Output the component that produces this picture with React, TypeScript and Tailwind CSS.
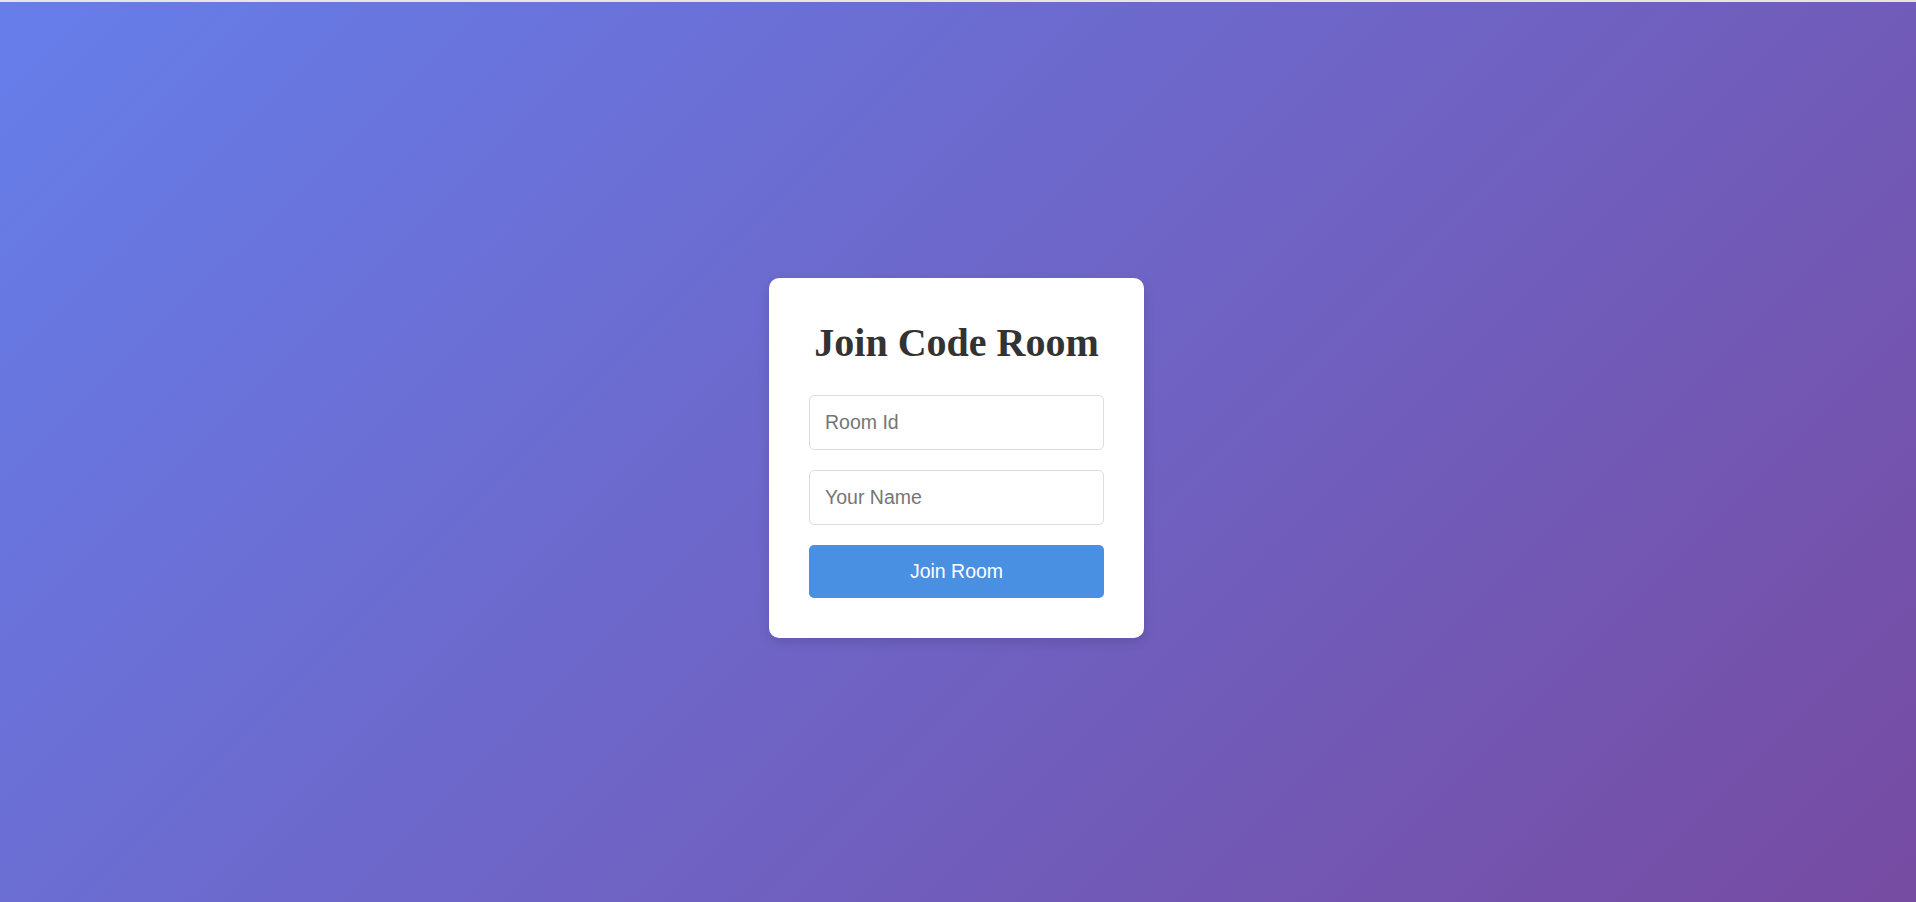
import React from 'react';

const JoinCard: React.FC = () => {
  const [roomId, setRoomId] = React.useState('');
  const [name, setName] = React.useState('');

  return (
    <div className="w-[375px] bg-white rounded-[10px] p-10 shadow-[0_4px_12px_rgba(0,0,0,0.12)]">
      <h1 className="text-center text-[40px] leading-[50px] font-bold text-[#333] mb-[27px] font-['Liberation_Serif',serif]">
        Join Code Room
      </h1>
      <div className="flex flex-col gap-5 font-['Liberation_Sans',Arial,sans-serif]">
        <input
          value={roomId}
          onChange={(e) => setRoomId(e.target.value)}
          placeholder="Room Id"
          className="w-full px-[15px] py-[15px] text-[19.5px] leading-[23px] border border-[#ddd] rounded-[5px] outline-none placeholder:text-[#757575]"
        />
        <input
          value={name}
          onChange={(e) => setName(e.target.value)}
          placeholder="Your Name"
          className="w-full px-[15px] py-[15px] text-[19.5px] leading-[23px] border border-[#ddd] rounded-[5px] outline-none placeholder:text-[#757575]"
        />
        <button className="w-full py-[15px] text-[19.5px] leading-[23px] bg-[#4a90e2] text-white rounded-[5px]">
          Join Room
        </button>
      </div>
    </div>
  );
}

export default function App() {
  return (
    <div className="w-full">
      <div className="h-[2px] bg-[#e6e6dc]" />
      <div className="h-[900px] flex items-start justify-center pt-[276px] pr-[3px] bg-[linear-gradient(135deg,#667eea_0%,#764ba2_100%)]">
        <JoinCard />
      </div>
    </div>
  );
}
